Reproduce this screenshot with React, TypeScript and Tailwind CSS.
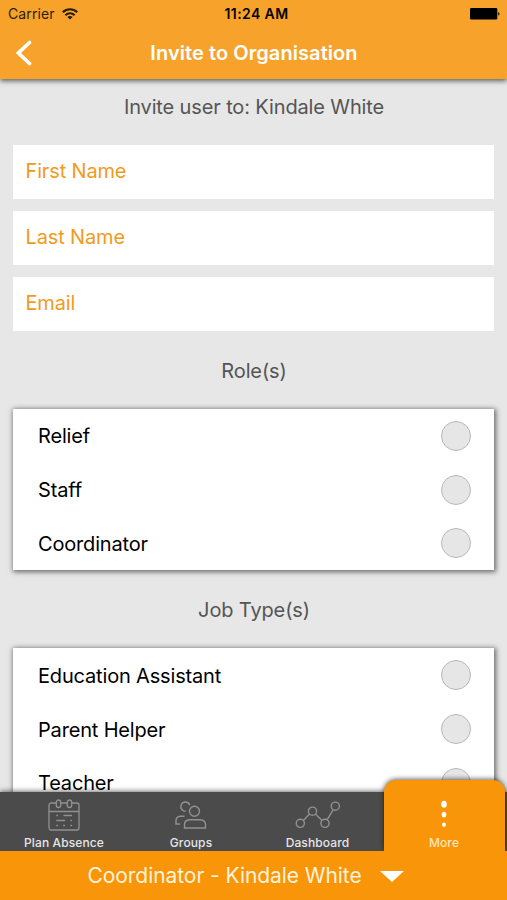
import React, { useState } from 'react';
import { clsx } from 'clsx';

interface IconProps {
  className?: string;
}

interface TabItem {
  label: string;
  icon: React.ComponentType<IconProps>;
  iconClass: string;
}

const WifiIcon: React.FC<IconProps> = ({ className }) => (
  <svg className={className} viewBox="0 0 16 12" fill="none" stroke="currentColor" strokeWidth="2.1">
    <path d="M.8 4.300C4.800 .3 11.200 .3 15.200 4.300" />
    <path d="M3.400 7.200C6 4.600 10 4.600 12.600 7.200" />
    <path d="M8 11.600 5.300 9C7 7.500 9 7.500 10.700 9Z" fill="currentColor" stroke="none" />
  </svg>
);

const BatteryIcon: React.FC<IconProps> = ({ className }) => (
  <svg className={className} viewBox="0 0 30 12" fill="currentColor">
    <rect x="0" y="0" width="27.300" height="11.500" rx="1.200" />
    <path d="M28.200 3.900c1.700.5 1.700 3.200 0 3.700Z" />
  </svg>
);

const BackIcon: React.FC<IconProps> = ({ className }) => (
  <svg className={className} viewBox="0 0 17 26" fill="none" stroke="currentColor" strokeWidth="3.700" strokeLinecap="round">
    <path d="M14.500 2.500 3.400 13 14.500 23.500" />
  </svg>
);

const CalendarIcon: React.FC<IconProps> = ({ className }) => (
  <svg className={className} viewBox="0 0 32 32" fill="none" stroke="currentColor" strokeWidth="1.300">
    <path d="M8.300 4H3.200A2.200 2.200 0 0 0 1 6.200V28.800A2.200 2.200 0 0 0 3.200 31H28.800A2.200 2.200 0 0 0 31 28.800V6.200A2.200 2.200 0 0 0 28.800 4H23.700M12.700 4H19.300M1 12.500H31" />
    <rect x="8.300" y="1" width="4.400" height="7.500" rx="2.200" />
    <rect x="19.300" y="1" width="4.400" height="7.500" rx="2.200" />
    <path d="M8.300 16.500H10M15.500 16.500H24M8.300 21.500H17M22.500 21.500H24M8.300 26.500H10M15.200 26.500H17M22.500 26.500H24" strokeWidth="1.700" />
  </svg>
);

const GroupsIcon: React.FC<IconProps> = ({ className }) => (
  <svg className={className} viewBox="0 0 32 28" fill="none" stroke="currentColor" strokeWidth="1.400">
    <circle cx="19.500" cy="10.200" r="5" />
    <path d="M9.500 27V23.500C9.500 20.500 12 19 14.500 18.800H25C28 19 30.500 20.500 30.500 23.500V27Z" />
    <path d="M14.800 4.200C14.300 2.500 12.500 1 10.500 1A4.600 4.600 0 0 0 8.200 9.600C9 10 9.800 10.200 10.600 10.200" />
    <path d="M9.500 15.200H5.500C3 15.400 1 17.200 1 19.500V23H5" />
  </svg>
);

const DashboardIcon: React.FC<IconProps> = ({ className }) => (
  <svg className={className} viewBox="0 0 46 28" fill="none" stroke="currentColor" strokeWidth="1.400">
    <circle cx="5.300" cy="22.300" r="4.100" />
    <circle cx="17.500" cy="10.200" r="4.100" />
    <circle cx="30" cy="22.300" r="4.100" />
    <circle cx="40.300" cy="5.200" r="4.100" />
    <path d="M8.300 19.400 14.600 13.100M20.400 13.100 27.100 19.400M32.100 18.800 38.200 8.700" />
  </svg>
);

const MoreIcon: React.FC<IconProps> = ({ className }) => (
  <svg className={className} viewBox="0 0 8 28" fill="currentColor">
    <ellipse cx="4" cy="4.300" rx="2.800" ry="3.500" />
    <ellipse cx="4" cy="14.600" rx="2.300" ry="2.900" />
    <ellipse cx="4" cy="24.800" rx="1.900" ry="2.300" />
  </svg>
);

const fields = ['First Name', 'Last Name', 'Email'];
const roles = ['Relief', 'Staff', 'Coordinator'];
const jobTypes = ['Education Assistant', 'Parent Helper', 'Teacher'];

const tabs: TabItem[] = [
  { label: 'Plan Absence', icon: CalendarIcon, iconClass: 'h-8 w-8' },
  { label: 'Groups', icon: GroupsIcon, iconClass: 'h-7 w-8' },
  { label: 'Dashboard', icon: DashboardIcon, iconClass: 'h-7 w-[46px]' },
];

const SectionTitle: React.FC<{ children: React.ReactNode }> = ({ children }) => (
  <h2 className="pl-px text-center text-[20px] leading-6 tracking-[-0.13px] text-[#555]">{children}</h2>
);

const OptionList: React.FC<{ options: string[] }> = ({ options }) => {
  const [selected, setSelected] = useState<string[]>([]);

  const toggle = (option: string) => {
    setSelected((prev) =>
      prev.includes(option) ? prev.filter((o) => o !== option) : [...prev, option]
    );
  };

  return (
    <div className="mx-[13px] bg-white shadow-[1px_1px_5px_1px_rgba(0,0,0,0.55)]">
      {options.map((option) => (
        <button
          key={option}
          onClick={() => toggle(option)}
          className="flex h-[53.8px] w-full items-center justify-between pl-[25px] pr-[23.5px] text-left text-[20px] tracking-[-0.17px] text-black"
        >
          <span className="pt-[1.2px]">{option}</span>
          <span
            className={clsx(
              'h-[30px] w-[30px] rounded-full border-[1.5px] border-[#b8b8b8]',
              selected.includes(option) ? 'bg-[#f99509]' : 'bg-[#e6e6e6]'
            )}
          />
        </button>
      ))}
    </div>
  );
};

const App: React.FC = () => {
  return (
    <div className="flex h-[900px] w-[507px] flex-col overflow-hidden bg-[#e7e7e7] font-['Inter',sans-serif]">
      {/* Header */}
      <header className="relative z-10 h-[79px] shrink-0 bg-[#f7a32b] shadow-[0_2px_5px_rgba(0,0,0,0.6)]">
        <div className="grid h-[27px] grid-cols-3 items-center pl-2 pr-[7px] text-[14px] text-black">
          <div className="flex items-center gap-[7px] text-[#2b1c05]">
            <span className="tracking-[0.1px]">Carrier</span>
            <WifiIcon className="h-3 w-4" />
          </div>
          <span className="pl-[5px] text-center font-semibold tracking-[0.4px]">11:24 AM</span>
          <BatteryIcon className="h-3 w-[30px] justify-self-end" />
        </div>
        <div className="grid h-[52px] grid-cols-[48px_1fr_48px] items-center">
          <button aria-label="Back" className="pl-[15px] text-white">
            <BackIcon className="h-[26px] w-[17px]" />
          </button>
          <h1 className="pb-px pl-px text-center text-[20px] font-semibold tracking-[0.07px] text-white">Invite to Organisation</h1>
        </div>
      </header>

      {/* Form */}
      <main className="min-h-0 flex-1 overflow-hidden pt-4">
        <SectionTitle>Invite user to: Kindale White</SectionTitle>
        <div className="mx-[13px] mt-[26px] flex flex-col gap-3">
          {fields.map((field) => (
            <input
              key={field}
              placeholder={field}
              className="h-[54px] bg-white pb-0.5 pl-[12.5px] pr-3 text-[20px] tracking-[-0.15px] text-[#f39a1d] outline-none placeholder:text-[#f39a1d]"
            />
          ))}
        </div>
        <div className="pb-[26px] pt-7">
          <SectionTitle>Role(s)</SectionTitle>
        </div>
        <OptionList options={roles} />
        <div className="pb-[26px] pt-7">
          <SectionTitle>Job Type(s)</SectionTitle>
        </div>
        <OptionList options={jobTypes} />
      </main>

      {/* Tab bar */}
      <nav className="relative z-10 grid h-[59px] shrink-0 grid-cols-[128px_126px_127px_126px] grid-rows-[59px] items-end bg-[#4b4b4b] shadow-[0_-1px_5px_rgba(0,0,0,0.55)]">
        {tabs.map(({ label, icon: Icon, iconClass }) => (
          <button key={label} className="flex h-[59px] flex-col items-center justify-between pt-[6.5px]">
            <span className="flex h-8 items-center text-[#919191]">
              <Icon className={iconClass} />
            </span>
            <span className="text-[12px] font-medium leading-4 tracking-[0.12px] text-[#e6e6e6]">{label}</span>
          </button>
        ))}
        <button className="ml-[2.5px] mr-[2.5px] flex h-[71px] flex-col items-center justify-between rounded-t-[12px] bg-[#f99509] pt-5 shadow-[0_-1px_5px_rgba(0,0,0,0.6)]">
          <MoreIcon className="h-7 w-2 text-white" />
          <span className="text-[12px] font-medium leading-4 tracking-[0.1px] text-[#ffe6bd]">More</span>
        </button>
      </nav>

      {/* Current role */}
      <footer className="relative z-20 flex h-[49px] shrink-0 items-center gap-[18px] bg-[#f99509] pl-[87.5px] text-[21px] tracking-[-0.06px] text-[#fff3dc]">
        <span>Coordinator - Kindale White</span>
        <svg className="mt-0.5 h-[11px] w-6 text-white" viewBox="0 0 24 11" fill="currentColor">
          <path d="M0 0H24L12 11Z" />
        </svg>
      </footer>
    </div>
  );
};

export default App;
